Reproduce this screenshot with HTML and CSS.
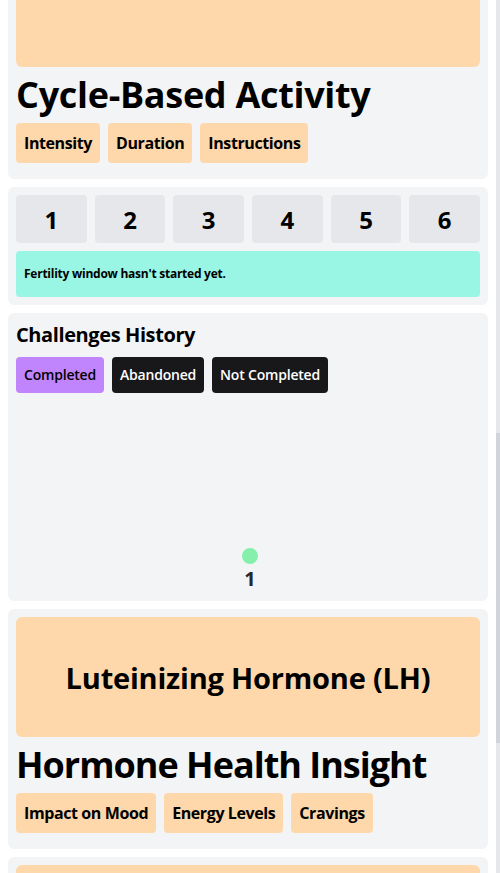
FILE: index.html
```html
<!DOCTYPE html>
<html lang="en">
<head>
<meta charset="utf-8">
<title>Cycle Dashboard</title>
<link rel="stylesheet" href="styles.css">
</head>
<body>
<main class="page">
  <section class="card card-hero card-clipped">
    <div class="hero hero-clipped"></div>
    <h1 class="title">Cycle-Based Activity</h1>
    <div class="tags">
      <span class="tag">Intensity</span>
      <span class="tag">Duration</span>
      <span class="tag">Instructions</span>
    </div>
  </section>

  <section class="card">
    <div class="days">
      <div class="day">1</div>
      <div class="day">2</div>
      <div class="day">3</div>
      <div class="day">4</div>
      <div class="day">5</div>
      <div class="day">6</div>
    </div>
    <p class="notice">Fertility window hasn't started yet.</p>
  </section>

  <section class="card">
    <h2 class="subtitle">Challenges History</h2>
    <div class="filters">
      <button class="filter filter-active">Completed</button>
      <button class="filter">Abandoned</button>
      <button class="filter">Not Completed</button>
    </div>
    <div class="chart">
      <span class="dot"></span>
      <span class="chart-label">1</span>
    </div>
  </section>

  <section class="card card-hero">
    <div class="hero hero-text">Luteinizing Hormone (LH)</div>
    <h1 class="title title-2">Hormone Health Insight</h1>
    <div class="tags">
      <span class="tag">Impact on Mood</span>
      <span class="tag">Energy Levels</span>
      <span class="tag">Cravings</span>
    </div>
  </section>

  <section class="card card-hero">
    <div class="hero"></div>
  </section>
</main>
<div class="scrollbar"><div class="thumb"></div></div>
</body>
</html>
```

FILE: styles.css
```css
html, body {
  margin: 0;
  padding: 0;
  overflow: hidden;
  height: 873px;
  background: #ffffff;
}

body {
  font-family: "Open Sans", "Noto Sans", sans-serif;
  color: #000;
}

.page {
  display: flex;
  flex-direction: column;
  gap: 8px;
  padding: 0 12px 0 8px;
}

.card {
  background: #f3f4f6;
  border-radius: 6px;
  padding: 8px;
  display: flex;
  flex-direction: column;
  gap: 8px;
}

.card-hero {
  padding-bottom: 16px;
}

.card-clipped {
  padding-top: 0;
  border-top-left-radius: 0;
  border-top-right-radius: 0;
}

.hero {
  background: #fed7aa;
  border-radius: 6px;
  height: 120px;
  flex-shrink: 0;
}

.hero-clipped {
  height: 67px;
  border-top-left-radius: 0;
  border-top-right-radius: 0;
}

.hero-text {
  display: flex;
  align-items: center;
  justify-content: center;
  font-size: 29px;
  font-weight: 700;
  letter-spacing: -0.2px;
}

.title {
  margin: 0;
  font-size: 36px;
  line-height: 40px;
  font-weight: 700;
  letter-spacing: -0.3px;
}

.title-2 {
  letter-spacing: -1px;
}

.tags {
  display: flex;
  gap: 8px;
}

.tag {
  background: #fed7aa;
  border-radius: 4px;
  padding: 8px;
  font-size: 16px;
  line-height: 24px;
  font-weight: 700;
  letter-spacing: -0.4px;
}

.days {
  display: grid;
  grid-template-columns: repeat(6, 1fr);
  gap: 8px;
}

.day {
  background: #e5e7eb;
  border-radius: 4px;
  height: 48px;
  display: flex;
  align-items: center;
  justify-content: center;
  font-size: 24px;
  font-weight: 700;
}

.notice {
  margin: 0;
  background: #99f6e4;
  border-radius: 4px;
  padding: 16px 8px;
  font-size: 12px;
  line-height: 14px;
  font-weight: 700;
  letter-spacing: -0.25px;
}

.subtitle {
  margin: 0;
  font-size: 20px;
  line-height: 28px;
  font-weight: 700;
  letter-spacing: -0.4px;
}

.filters {
  display: flex;
  gap: 8px;
}

.filter {
  border: 0;
  border-radius: 4px;
  padding: 8px;
  font-family: inherit;
  font-size: 14px;
  line-height: 20px;
  font-weight: 600;
  letter-spacing: -0.2px;
  background: #18181b;
  color: #fff;
}

.filter-active {
  background: #c084fc;
  color: #000;
}

.chart {
  height: 192px;
  padding-left: 4px;
  display: flex;
  flex-direction: column;
  align-items: center;
  justify-content: flex-end;
  gap: 1px;
}

.dot {
  width: 16px;
  height: 16px;
  border-radius: 50%;
  background: #86efac;
}

.chart-label {
  font-size: 20px;
  line-height: 28px;
  font-weight: 700;
  color: #27272a;
}

.scrollbar {
  position: fixed;
  top: 0;
  right: 0;
  width: 4px;
  height: 873px;
  background: #e5e7eb;
}

.thumb {
  margin-top: 433px;
  height: 310px;
  background: #d1d5db;
}
```
